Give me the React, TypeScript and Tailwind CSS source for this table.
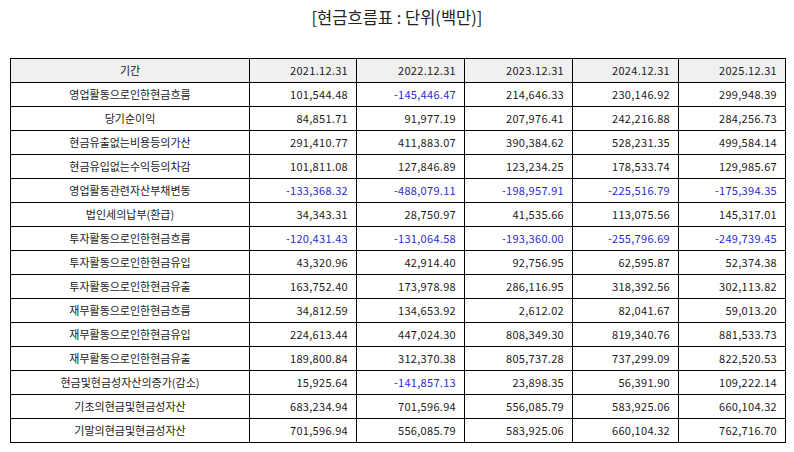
const rows: [string, string[]][] = [
  ["영업활동으로인한현금흐름", ["101,544.48", "-145,446.47", "214,646.33", "230,146.92", "299,948.39"]],
  ["당기순이익", ["84,851.71", "91,977.19", "207,976.41", "242,216.88", "284,256.73"]],
  ["현금유출없는비용등의가산", ["291,410.77", "411,883.07", "390,384.62", "528,231.35", "499,584.14"]],
  ["현금유입없는수익등의차감", ["101,811.08", "127,846.89", "123,234.25", "178,533.74", "129,985.67"]],
  ["영업활동관련자산부채변동", ["-133,368.32", "-488,079.11", "-198,957.91", "-225,516.79", "-175,394.35"]],
  ["법인세의납부(환급)", ["34,343.31", "28,750.97", "41,535.66", "113,075.56", "145,317.01"]],
  ["투자활동으로인한현금흐름", ["-120,431.43", "-131,064.58", "-193,360.00", "-255,796.69", "-249,739.45"]],
  ["투자활동으로인한현금유입", ["43,320.96", "42,914.40", "92,756.95", "62,595.87", "52,374.38"]],
  ["투자활동으로인한현금유출", ["163,752.40", "173,978.98", "286,116.95", "318,392.56", "302,113.82"]],
  ["재무활동으로인한현금흐름", ["34,812.59", "134,653.92", "2,612.02", "82,041.67", "59,013.20"]],
  ["재무활동으로인한현금유입", ["224,613.44", "447,024.30", "808,349.30", "819,340.76", "881,533.73"]],
  ["재무활동으로인한현금유출", ["189,800.84", "312,370.38", "805,737.28", "737,299.09", "822,520.53"]],
  ["현금및현금성자산의증가(감소)", ["15,925.64", "-141,857.13", "23,898.35", "56,391.90", "109,222.14"]],
  ["기초의현금및현금성자산", ["683,234.94", "701,596.94", "556,085.79", "583,925.06", "660,104.32"]],
  ["기말의현금및현금성자산", ["701,596.94", "556,085.79", "583,925.06", "660,104.32", "762,716.70"]],
];

const years = ["2021.12.31", "2022.12.31", "2023.12.31", "2024.12.31", "2025.12.31"];

export default function App() {
  return (
    <div
      className="w-[794px] h-[452px] bg-white text-[#1a1a1a] overflow-hidden"
      style={{ fontFamily: '"Noto Sans CJK KR", "Noto Sans", sans-serif' }}
    >
      <div className="h-[58px] pt-[6px] text-center text-[16.5px] leading-[22px] text-[#222]">
        [현금흐름표 : 단위(백만)]
      </div>
      <table className="ml-[10px] w-[775px] table-fixed border-collapse text-[11px]">
        <colgroup>
          <col className="w-[239px]" />
          <col className="w-[107px]" />
          <col className="w-[108px]" />
          <col className="w-[108px]" />
          <col className="w-[106px]" />
          <col className="w-[107px]" />
        </colgroup>
        <thead>
          <tr className="h-[24px] bg-[#f0f0f0]">
            <th className="border border-black font-normal text-center p-0">기간</th>
            {years.map((y) => (
              <th key={y} className="border border-black font-normal text-right pr-[8px] p-0 tracking-[0.3px]">
                {y}
              </th>
            ))}
          </tr>
        </thead>
        <tbody>
          {rows.map(([label, vals]) => (
            <tr key={label} className="h-[24px]">
              <td className="border border-black text-center p-0">{label}</td>
              {vals.map((v, i) => (
                <td
                  key={i}
                  className={
                    v.startsWith("-")
                      ? "border border-black text-right pr-[8px] p-0 tracking-[0.3px] text-[#2a2ad6]"
                      : "border border-black text-right pr-[8px] p-0 tracking-[0.3px]"
                  }
                >
                  {v}
                </td>
              ))}
            </tr>
          ))}
        </tbody>
      </table>
    </div>
  );
}
